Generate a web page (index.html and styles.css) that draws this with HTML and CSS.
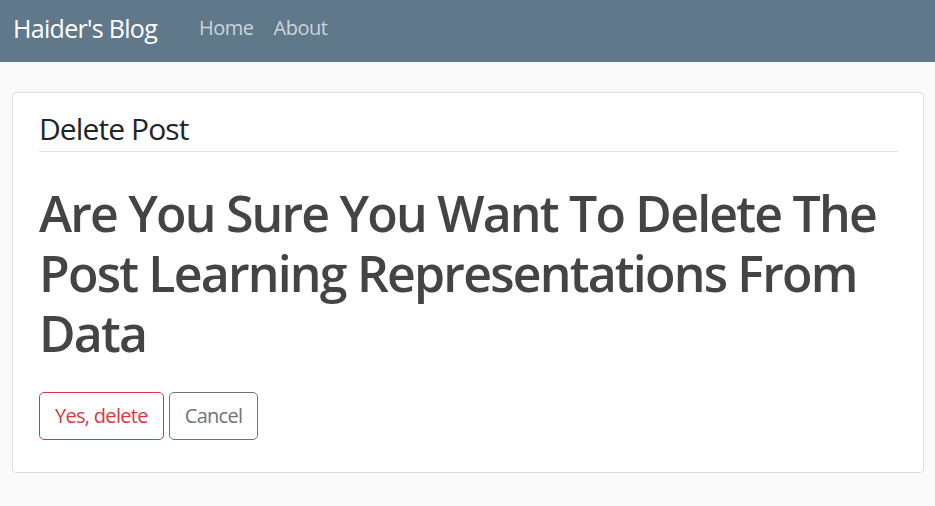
FILE: index.html
```html
<!DOCTYPE html>
<html lang="en">
<head>
<meta charset="utf-8">
<title>Delete Post</title>
<link rel="stylesheet" href="styles.css">
</head>
<body>
<header class="site-header">
  <nav class="navbar">
    <a class="brand" href="#">Haider's Blog</a>
    <div class="nav-links">
      <a class="nav-link" href="#">Home</a>
      <a class="nav-link" href="#">About</a>
    </div>
  </nav>
</header>
<main class="container">
  <div class="content-section">
    <form class="delete-form">
      <fieldset class="fieldset">
        <legend class="legend">Delete Post</legend>
        <h1 class="title">Are You Sure You Want To Delete The Post Learning Representations From Data</h1>
      </fieldset>
      <div class="actions">
        <button type="button" class="btn btn-danger">Yes, delete</button>
        <button type="button" class="btn btn-secondary">Cancel</button>
      </div>
    </form>
  </div>
</main>
</body>
</html>
```

FILE: styles.css
```css
* { box-sizing: border-box; }
html, body { margin: 0; padding: 0; }
body {
  background: #fafafa;
  color: #444444;
  font-family: "Open Sans", "Noto Sans", Arial, sans-serif;
  height: 506px;
}
.site-header {
  background: #5f788a;
  height: 62px;
}
.navbar {
  display: flex;
  align-items: center;
  height: 62px;
  padding: 0 0 7px 13px;
}
.brand {
  color: #ffffff;
  text-decoration: none;
  font-size: 25px;
  letter-spacing: -0.7px;
  margin-right: 32px;
}
.nav-links {
  display: flex;
}
.nav-link {
  color: #cbd5db;
  text-decoration: none;
  font-size: 20px;
  letter-spacing: -0.5px;
  padding: 0 10px;
}
.container {
  padding: 30px 11px 0 12px;
}
.content-section {
  background: #ffffff;
  border: 1px solid #dddddd;
  border-radius: 4px;
  padding: 18px 25px 32px 26px;
}
.fieldset {
  border: 0;
  margin: 0;
  padding: 0;
}
.legend {
  display: block;
  width: 100%;
  font-size: 30px;
  line-height: 36px;
  letter-spacing: -0.9px;
  color: #212529;
  padding: 0 0 4px;
  border-bottom: 1px solid #dee2e6;
}
.title {
  margin: 31px 0 29px;
  font-size: 50px;
  line-height: 60px;
  font-weight: 600;
  letter-spacing: -1.8px;
  color: #444444;
}
.actions {
  display: flex;
  gap: 5px;
}
.btn {
  font-family: inherit;
  font-size: 20px;
  line-height: 30px;
  letter-spacing: -0.7px;
  padding: 8px 15px;
  background: #ffffff;
  border-radius: 5px;
  border: 1px solid;
  height: 48px;
}
.btn-danger { color: #dc3545; border-color: #dc3545; }
.btn-secondary { color: #6c757d; border-color: #6c757d; }
```
